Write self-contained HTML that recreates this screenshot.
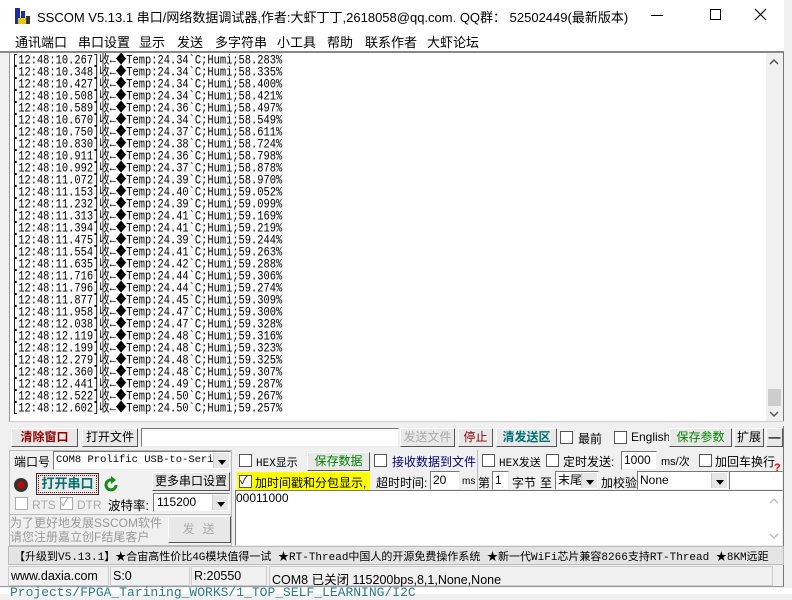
<!DOCTYPE html>
<html><head><meta charset="utf-8"><style>
*{box-sizing:border-box;margin:0;padding:0}
body{width:792px;height:594px;overflow:hidden;background:#f0f0f0;font-family:"Liberation Sans","Noto Sans CJK SC",sans-serif;font-size:12px;color:#000;position:relative}
.a{position:absolute;white-space:nowrap}
.win{position:absolute;left:0;top:0;width:784px;height:587px;background:#f0f0f0;border-right:1px solid #777;border-bottom:1px solid #999}
.btn{position:absolute;background:#e8e8e8;border:1px solid;border-color:#fff #555 #555 #fff;text-align:center;font-size:12px;line-height:17px;white-space:nowrap}
.inp{position:absolute;background:#fff;border:1px solid;border-color:#777 #eee #eee #777}
.cb{position:absolute;width:13px;height:13px;background:#fff;border:1px solid #555}
.mono{font-family:"Liberation Mono","Noto Sans CJK SC",monospace}
.dd{position:absolute;right:1px;top:1px;width:16px;bottom:1px;background:#e6e6e6;border-left:1px solid #ccc}
.dd:after{content:"";position:absolute;left:4px;top:7px;border:4px solid transparent;border-top:5px solid #000}
</style></head><body>
<div class="win">
<div class="a" style="left:0;top:0;width:784px;height:30px;background:#fff"></div>
<svg class="a" style="left:15px;top:8px" width="16" height="16"><rect x="0" y="0" width="5" height="16" fill="#1a2fa0"/><rect x="6" y="3" width="4" height="13" fill="#1a2fa0"/><rect x="3" y="10" width="10" height="6" fill="#e8c800"/><rect x="11" y="8" width="4" height="8" fill="#333"/></svg>
<div class="a" style="left:37px;top:7px;font-size:13px">SSCOM V5.13.1 串口/网络数据调试器,作者:大虾丁丁,2618058@qq.com. QQ群： 52502449(最新版本)</div>
<div class="a" style="left:651px;top:15px;width:12px;height:1px;background:#000"></div>
<div class="a" style="left:710px;top:9px;width:11px;height:11px;border:1px solid #000"></div>
<svg class="a" style="left:754px;top:8px" width="13" height="13"><path d="M1 1L12 12M12 1L1 12" stroke="#000" stroke-width="1.1"/></svg>
<div class="a" style="left:0;top:30px;width:784px;height:21px;background:#fff"></div>
<div class="a" style="left:15px;top:32px;font-size:13px">通讯端口</div>
<div class="a" style="left:78px;top:32px;font-size:13px">串口设置</div>
<div class="a" style="left:139px;top:32px;font-size:13px">显示</div>
<div class="a" style="left:177px;top:32px;font-size:13px">发送</div>
<div class="a" style="left:215px;top:32px;font-size:13px">多字符串</div>
<div class="a" style="left:277px;top:32px;font-size:13px">小工具</div>
<div class="a" style="left:327px;top:32px;font-size:13px">帮助</div>
<div class="a" style="left:365px;top:32px;font-size:13px">联系作者</div>
<div class="a" style="left:427px;top:32px;font-size:13px">大虾论坛</div>
<div class="a" style="left:0;top:51px;width:784px;height:2px;background:#888"></div>
<div class="a" style="left:9px;top:53px;width:773px;height:368px;background:#fff;border-left:1px solid #999;overflow:hidden">
<div class="a mono" style="left:2px;top:2px;font-size:10.4px;line-height:10px;white-space:pre;transform:scaleY(1.2);transform-origin:0 0">[12:48:10.267]收←◆Temp:24.34`C;Humi;58.283%
[12:48:10.348]收←◆Temp:24.34`C;Humi;58.335%
[12:48:10.427]收←◆Temp:24.34`C;Humi;58.400%
[12:48:10.508]收←◆Temp:24.34`C;Humi;58.421%
[12:48:10.589]收←◆Temp:24.36`C;Humi;58.497%
[12:48:10.670]收←◆Temp:24.34`C;Humi;58.549%
[12:48:10.750]收←◆Temp:24.37`C;Humi;58.611%
[12:48:10.830]收←◆Temp:24.38`C;Humi;58.724%
[12:48:10.911]收←◆Temp:24.36`C;Humi;58.798%
[12:48:10.992]收←◆Temp:24.37`C;Humi;58.878%
[12:48:11.072]收←◆Temp:24.39`C;Humi;58.970%
[12:48:11.153]收←◆Temp:24.40`C;Humi;59.052%
[12:48:11.232]收←◆Temp:24.39`C;Humi;59.099%
[12:48:11.313]收←◆Temp:24.41`C;Humi;59.169%
[12:48:11.394]收←◆Temp:24.41`C;Humi;59.219%
[12:48:11.475]收←◆Temp:24.39`C;Humi;59.244%
[12:48:11.554]收←◆Temp:24.41`C;Humi;59.263%
[12:48:11.635]收←◆Temp:24.42`C;Humi;59.288%
[12:48:11.716]收←◆Temp:24.44`C;Humi;59.306%
[12:48:11.796]收←◆Temp:24.44`C;Humi;59.274%
[12:48:11.877]收←◆Temp:24.45`C;Humi;59.309%
[12:48:11.958]收←◆Temp:24.47`C;Humi;59.300%
[12:48:12.038]收←◆Temp:24.47`C;Humi;59.328%
[12:48:12.119]收←◆Temp:24.48`C;Humi;59.316%
[12:48:12.199]收←◆Temp:24.48`C;Humi;59.323%
[12:48:12.279]收←◆Temp:24.48`C;Humi;59.325%
[12:48:12.360]收←◆Temp:24.48`C;Humi;59.307%
[12:48:12.441]收←◆Temp:24.49`C;Humi;59.287%
[12:48:12.522]收←◆Temp:24.50`C;Humi;59.267%
[12:48:12.602]收←◆Temp:24.50`C;Humi;59.257%</div>
</div>
<div class="a" style="left:766px;top:53px;width:16px;height:368px;background:#f0f0f0"></div>
<div class="a" style="left:768px;top:389px;width:13px;height:17px;background:#cdcdcd"></div>
<svg class="a" style="left:769px;top:58px" width="10" height="8"><path d="M1 6L5 2L9 6" stroke="#555" stroke-width="1.5" fill="none"/></svg>
<svg class="a" style="left:769px;top:410px" width="10" height="8"><path d="M1 2L5 6L9 2" stroke="#555" stroke-width="1.5" fill="none"/></svg>
<div class="a" style="left:8px;top:421px;width:776px;height:5px;background:#f0f0f0;border-top:1px solid #ccc"></div>
<div class="btn" style="left:11px;top:428px;width:67px;height:19px;color:#8b0000;font-weight:bold">清除窗口</div>
<div class="btn" style="left:82px;top:428px;width:56px;height:19px">打开文件</div>
<div class="inp" style="left:141px;top:428px;width:258px;height:19px"></div>
<div class="btn" style="left:400px;top:428px;width:55px;height:19px;color:#aaa">发送文件</div>
<div class="btn" style="left:458px;top:428px;width:35px;height:19px;color:#8b0000">停止</div>
<div class="btn" style="left:496px;top:428px;width:61px;height:19px;color:#007070;font-weight:bold">清发送区</div>
<div class="cb" style="left:560px;top:431px"></div><div class="a" style="left:578px;top:430px">最前</div>
<div class="cb" style="left:614px;top:431px"></div><div class="a" style="left:631px;top:430px">English</div>
<div class="btn" style="left:669px;top:428px;width:63px;height:19px;color:#008000">保存参数</div>
<div class="btn" style="left:734px;top:428px;width:30px;height:19px">扩展</div>
<div class="btn" style="left:766px;top:428px;width:17px;height:19px;font-weight:bold">—</div>
<div class="a" style="left:9px;top:450px;width:223px;height:96px;border:1px solid #bbb"></div>
<div class="a" style="left:14px;top:453px">端口号</div>
<div class="inp mono" style="left:53px;top:451px;width:178px;height:19px;font-size:10.5px;line-height:16px;padding-left:2px;overflow:hidden">COM8 Prolific USB-to-Seria<div class="dd"></div></div>
<svg class="a" style="left:13px;top:477px" width="16" height="16"><circle cx="8" cy="8" r="7" fill="#333"/><circle cx="8" cy="8" r="3.5" fill="#c00"/></svg>
<div class="btn" style="left:36px;top:473px;width:63px;height:22px;border:1px solid #333;color:#007070;font-weight:bold;font-size:13px;line-height:19px;outline:1px dotted #900;outline-offset:-3px">打开串口</div>
<svg class="a" style="left:104px;top:476px" width="16" height="18"><path d="M12 9A5 5 0 1 1 8 4" stroke="#1a8a1a" stroke-width="3" fill="none"/><path d="M7 0L12 4L7 8Z" fill="#1a8a1a"/></svg>
<div class="btn" style="left:152px;top:472px;width:78px;height:19px">更多串口设置</div>
<div class="cb" style="left:15px;top:497px;border-color:#aaa"></div><div class="a" style="left:32px;top:498px;color:#aaa">RTS</div>
<div class="cb" style="left:60px;top:497px;border-color:#aaa;color:#999;font-size:11px;line-height:11px">✓</div><div class="a" style="left:77px;top:498px;color:#aaa">DTR</div>
<div class="a" style="left:108px;top:495px;font-size:12.5px">波特率:</div>
<div class="inp" style="left:153px;top:493px;width:77px;height:19px;line-height:16px;padding-left:3px">115200<div class="dd"></div></div>
<div class="a" style="left:9px;top:514px;width:223px;height:1px;background:#bbb"></div>
<div class="a" style="left:10px;top:516px;color:#999;font-size:12px;line-height:14px">为了更好地发展SSCOM软件<br>请您注册嘉立创F结尾客户</div>
<div class="btn" style="left:168px;top:516px;width:63px;height:27px;color:#aaa;line-height:25px;letter-spacing:8px;padding-left:6px">发送</div>
<div class="cb" style="left:239px;top:454px"></div><div class="a mono" style="left:256px;top:454px;font-size:11px">HEX显示</div>
<div class="btn" style="left:307px;top:452px;width:63px;height:19px;color:#008000">保存数据</div>
<div class="cb" style="left:374px;top:454px"></div><div class="a" style="left:392px;top:453px;color:#000080">接收数据到文件</div>
<div class="a" style="left:477px;top:450px;width:1px;height:42px;background:#bbb"></div>
<div class="cb" style="left:482px;top:454px"></div><div class="a mono" style="left:499px;top:454px;font-size:11px">HEX发送</div>
<div class="cb" style="left:546px;top:454px"></div><div class="a" style="left:563px;top:453px">定时发送:</div>
<div class="inp" style="left:621px;top:451px;width:36px;height:19px;line-height:16px;padding-left:2px">1000</div>
<div class="a" style="left:661px;top:453px;font-size:11px">ms/次</div>
<div class="cb" style="left:699px;top:454px"></div><div class="a" style="left:715px;top:453px">加回车换行</div>
<div class="a" style="left:774px;top:462px;color:#e00;font-weight:bold;font-size:11px">?</div>
<div class="a" style="left:237px;top:472px;width:133px;height:18px;background:#ff0"></div>
<div class="cb" style="left:239px;top:475px;font-size:11px;line-height:11px">✓</div><div class="a" style="left:255px;top:474px">加时间戳和分包显示,</div>
<div class="a" style="left:376px;top:474px">超时时间:</div>
<div class="inp" style="left:430px;top:471px;width:30px;height:19px;line-height:16px;padding-left:2px">20</div>
<div class="a" style="left:462px;top:476px;font-size:10px">ms</div>
<div class="a" style="left:478px;top:474px">第</div>
<div class="inp" style="left:492px;top:471px;width:17px;height:19px;line-height:16px;padding-left:2px">1</div>
<div class="a" style="left:512px;top:474px">字节</div>
<div class="a" style="left:540px;top:474px">至</div>
<div class="inp" style="left:555px;top:471px;width:44px;height:19px;line-height:16px;padding-left:2px">末尾<div class="dd"></div></div>
<div class="a" style="left:601px;top:474px">加校验</div>
<div class="inp" style="left:637px;top:471px;width:92px;height:19px;line-height:16px;padding-left:2px">None<div class="dd"></div></div>
<div class="inp" style="left:729px;top:471px;width:54px;height:19px"></div>
<div class="inp" style="left:235px;top:490px;width:548px;height:56px"></div>
<div class="a" style="left:236px;top:491px">00011000</div>
<svg class="a" style="left:769px;top:497px" width="10" height="8"><path d="M1 6L5 2L9 6" stroke="#bbb" stroke-width="1.3" fill="none"/></svg>
<svg class="a" style="left:769px;top:532px" width="10" height="8"><path d="M1 2L5 6L9 2" stroke="#bbb" stroke-width="1.3" fill="none"/></svg>
<div class="a" style="left:8px;top:546px;width:776px;height:19px;background:#e4e4e4;border:1px solid #bbb"></div>
<div class="a mono" style="left:14px;top:548px;font-size:11px;width:768px;overflow:hidden">【升级到V5.13.1】★合宙高性价比4G模块值得一试 ★RT-Thread中国人的开源免费操作系统 ★新一代WiFi芯片兼容8266支持RT-Thread ★8KM远距</div>
<div class="a" style="left:8px;top:566px;width:101px;height:20px;border:1px solid #ccc;padding:2px 0 0 2px;font-size:12.5px">www.daxia.com</div>
<div class="a" style="left:110px;top:566px;width:80px;height:20px;border:1px solid #ccc;padding:2px 0 0 2px;font-size:12.5px">S:0</div>
<div class="a" style="left:191px;top:566px;width:76px;height:20px;border:1px solid #ccc;padding:2px 0 0 2px;font-size:12.5px">R:20550</div>
<div class="a" style="left:269px;top:566px;width:504px;height:20px;border:1px solid #ccc;padding:2px 0 0 2px;font-size:12.5px">COM8 已关闭  115200bps,8,1,None,None</div>
</div>
<div class="a" style="left:0;top:588px;width:792px;height:6px;background:#fff"></div>
<div class="a mono" style="left:10px;top:585px;color:#2a7a8a;font-size:13px">Projects/FPGA_Tarining_WORKS/1_TOP_SELF_LEARNING/I2C</div>
</body></html>
